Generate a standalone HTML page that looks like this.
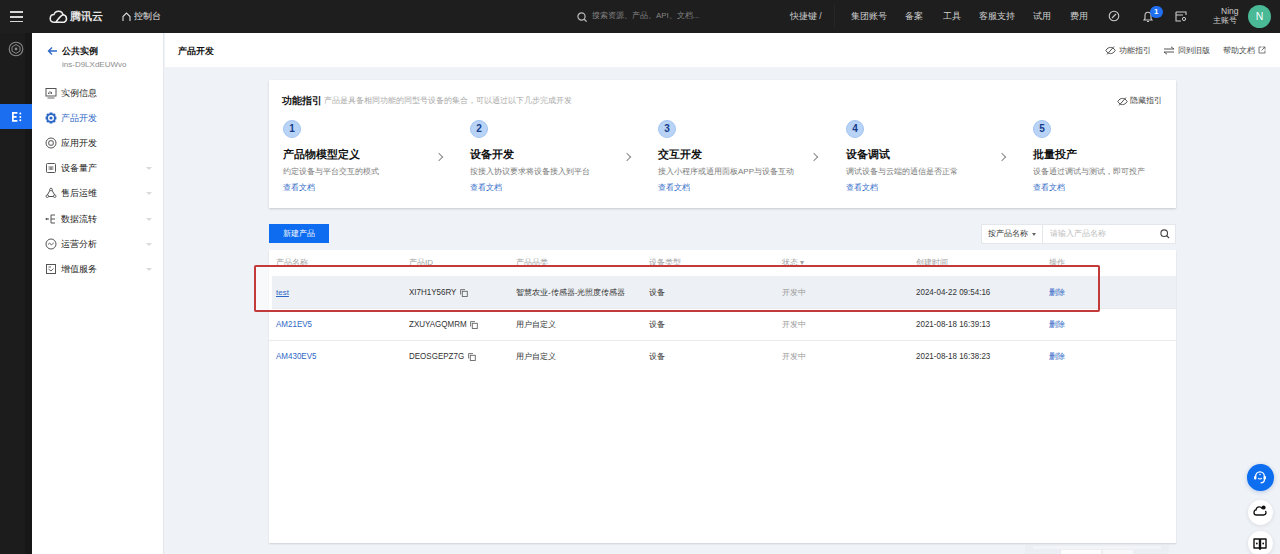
<!DOCTYPE html>
<html><head><meta charset="utf-8">
<style>
*{margin:0;padding:0;box-sizing:border-box}
html,body{width:1280px;height:554px;overflow:hidden;background:#eff2f6;font-family:"Liberation Sans",sans-serif;color:#333}
.abs{position:absolute}
#top{position:absolute;left:0;top:0;width:1280px;height:33px;background:#1e1e1e}
#top .t{position:absolute;color:#d0d0d0;font-size:8.5px;line-height:10px;top:11px;white-space:nowrap}
#lnav{position:absolute;left:0;top:33px;width:32px;height:521px;background:#1c1c1c}
#snav{position:absolute;left:32px;top:33px;width:132px;height:521px;background:#fff;border-right:1px solid #e4e6ea}
.mi{position:absolute;left:61px;font-size:9.4px;line-height:12px;color:#222;white-space:nowrap;font-weight:500}
.mic{position:absolute;left:45px;width:11px;height:10px}
.arr{position:absolute;left:146px;width:0;height:0;border-left:3px solid transparent;border-right:3px solid transparent;border-top:3px solid #dadada}
#hdr{position:absolute;left:165px;top:33px;width:1115px;height:34px;background:#fff}
.card{position:absolute;background:#fff;box-shadow:0 1px 2px rgba(0,0,0,.17)}
.step{position:absolute;top:119px}
.circ{position:absolute;left:0;top:1px;width:18px;height:18px;border-radius:50%;background:#b8d3f6;border:1px solid #a3c5f2;color:#163d8c;font-weight:bold;font-size:10px;line-height:16px;text-align:center}
.stt{position:absolute;left:0;top:29px;font-size:10.5px;font-weight:bold;color:#111;white-space:nowrap;line-height:12px}
.std{position:absolute;left:0;top:48px;font-size:8px;color:#7a7a7a;white-space:nowrap;line-height:10px}
.stl{position:absolute;left:0;top:64px;font-size:8px;color:#2d67c6;white-space:nowrap;line-height:10px}
.chev{position:absolute;top:154px;width:6px;height:6px;border-right:1px solid #8a8a8a;border-top:1px solid #8a8a8a;transform:rotate(45deg)}
.th{position:absolute;top:257.5px;font-size:8px;color:#a0a0a0;line-height:10px;white-space:nowrap}
.td{position:absolute;font-size:8px;color:#333;line-height:10px;white-space:nowrap}
.lnk{color:#2d67c6}
.lat{transform:scaleY(1.16);transform-origin:0 65%}
.rowline{position:absolute;left:269px;width:907px;height:1px;background:#e8eaee}
</style></head><body>

<div id="top">
  <!-- hamburger -->
  <div class="abs" style="left:10px;top:11.2px;width:13px;height:1.6px;background:#d6d6d6"></div>
  <div class="abs" style="left:10px;top:16px;width:13px;height:1.6px;background:#d6d6d6"></div>
  <div class="abs" style="left:10px;top:20.8px;width:13px;height:1.6px;background:#d6d6d6"></div>
  <!-- logo -->
  <svg class="abs" style="left:48.5px;top:8.8px" width="20" height="14.5" viewBox="0.4 0.6 18.2 13.2"><path d="M4.2 12.6 H14.2 A3.5 3.5 0 0 0 13.2 5.9 A4.3 4.3 0 0 0 4.9 5.7 A3.5 3.5 0 0 0 4.2 12.6 M6.6 12.6 C8.5 10 10 8 11.5 6.8 C12.4 6.1 13.2 5.9 14.2 5.9" fill="none" stroke="#eee" stroke-width="1.4" stroke-linejoin="round"/></svg>
  <div class="t" style="left:70px;top:10px;font-size:11px;line-height:13px;color:#e2e2e2;font-weight:bold">腾讯云</div>
  <svg class="abs" style="left:122px;top:12px" width="9" height="9" viewBox="0 0 9 9"><path d="M1 9 V4.5 L4.5 1 L8 4.5 V9" fill="none" stroke="#ddd" stroke-width="1.1"/></svg>
  <div class="t" style="left:134px;color:#e6e6e6">控制台</div>
  <!-- search -->
  <svg class="abs" style="left:577px;top:12px" width="11" height="10" viewBox="0 0 11 10"><circle cx="4.5" cy="4.5" r="3.6" fill="none" stroke="#bbb" stroke-width="1.2"/><path d="M7.2 7.2 L9.6 9.6" stroke="#bbb" stroke-width="1.3"/></svg>
  <div class="t" style="left:592px;color:#858585;font-size:7.9px">搜索资源、产品、API、文档...</div>
  <div class="t" style="left:790px;color:#ccc">快捷键 /</div>
  <div class="abs" style="left:834px;top:4px;width:1px;height:25px;background:#262626"></div>
  <div class="t" style="left:851px">集团账号</div>
  <div class="t" style="left:905px">备案</div>
  <div class="t" style="left:943px">工具</div>
  <div class="t" style="left:979px">客服支持</div>
  <div class="t" style="left:1033px">试用</div>
  <div class="t" style="left:1070px">费用</div>
  <svg class="abs" style="left:1108px;top:10px" width="12" height="12" viewBox="0 0 12 12"><circle cx="6" cy="6" r="4.8" fill="none" stroke="#ccc" stroke-width="1.1"/><path d="M4 8 L8 4" stroke="#ccc" stroke-width="1.1"/></svg>
  <svg class="abs" style="left:1142px;top:10px" width="12" height="13" viewBox="0 0 12 13"><path d="M2 10 H10 L9 8.5 V5.5 C9 3.5 7.6 2.2 6 2.2 C4.4 2.2 3 3.5 3 5.5 V8.5 Z M5 11.5 H7" fill="none" stroke="#ccc" stroke-width="1.1"/></svg>
  <div class="abs" style="left:1150px;top:5.8px;width:12.5px;height:12.5px;border-radius:50%;background:#1f6ff0;color:#fff;font-size:8px;font-weight:bold;line-height:12.5px;text-align:center">1</div>
  <svg class="abs" style="left:1175px;top:11px" width="12" height="11" viewBox="0 0 12 11"><path d="M1 1 H11 V4 M1 1 V10 H6 M1 4 H8" fill="none" stroke="#ccc" stroke-width="1.1"/><circle cx="9" cy="8" r="1.6" fill="none" stroke="#ccc" stroke-width="1"/></svg>
  <div class="t" style="left:1221px;top:6px;color:#ccc">Ning</div>
  <div class="t" style="left:1213px;top:16px;color:#ccc;font-size:8px">主账号</div>
  <div class="abs" style="left:1248px;top:5px;width:23px;height:23px;border-radius:50%;background:#49b996;color:#f4fffb;font-size:10.5px;line-height:23px;text-align:center">N</div>
</div>

<div id="lnav">
  <div class="abs" style="left:25px;top:0;width:7px;height:521px;background:#171717"></div>
  <svg class="abs" style="left:8px;top:8px" width="16" height="16" viewBox="0 0 16 16"><circle cx="8" cy="8" r="6.8" fill="none" stroke="#8a8a8a" stroke-width="1.1"/><path d="M8 3.5 L12 6 V10 L8 12.5 L4 10 V6 Z" fill="none" stroke="#8a8a8a" stroke-width="1"/><circle cx="8" cy="8" r="1.4" fill="#8a8a8a"/></svg>
  <div class="abs" style="left:0;top:71px;width:32px;height:24.5px;background:#1b6ef0"></div>
  <svg class="abs" style="left:10.5px;top:79px" width="11" height="10" viewBox="0 0 11 10"><path d="M1 0.9 H6.4 M1 4.8 H5.6 M1 8.9 H6.4 M1.9 0.9 V8.9" fill="none" stroke="#fff" stroke-width="1.7"/><circle cx="9.3" cy="1.5" r="1" fill="#fff"/><circle cx="9.3" cy="4.9" r="1" fill="#fff"/><circle cx="9.3" cy="8.3" r="1" fill="#fff"/></svg>
</div>

<div id="snav"></div>
<svg class="abs" style="left:47px;top:46px" width="11" height="10" viewBox="0 0 11 10"><path d="M10 5 H1.5 M5 1.5 L1.5 5 L5 8.5" fill="none" stroke="#2d67c6" stroke-width="1.3"/></svg>
<div class="mi" style="left:62px;top:45px;font-weight:bold;font-size:9.3px;color:#111">公共实例</div>
<div class="mi" style="left:62px;top:59px;font-size:8px;color:#8c8c8c">ins-D9LXdEUWvo</div>

<svg class="abs" style="left:45px;top:87px" width="12" height="12" viewBox="0 0 12 12"><rect x="1" y="1.5" width="10" height="7.5" fill="none" stroke="#555" stroke-width="1"/><path d="M2.5 11 H9.5 M3.5 7 V5.5 M5 7 V4 M6.5 7 V5" stroke="#555" stroke-width="0.9"/></svg>
<svg class="abs" style="left:45px;top:112px" width="12" height="12" viewBox="0 0 12 12"><path d="M4.6 0.6 H7.4 L7.8 2 L9.2 1.3 L10.7 2.8 L10 4.2 L11.4 4.6 V7.4 L10 7.8 L10.7 9.2 L9.2 10.7 L7.8 10 L7.4 11.4 H4.6 L4.2 10 L2.8 10.7 L1.3 9.2 L2 7.8 L0.6 7.4 V4.6 L2 4.2 L1.3 2.8 L2.8 1.3 L4.2 2 Z" fill="#2d67c6"/><circle cx="6" cy="6" r="3" fill="#fff"/><circle cx="6" cy="6" r="1.6" fill="#2d67c6"/></svg>
<svg class="abs" style="left:45px;top:137px" width="12" height="12" viewBox="0 0 12 12"><circle cx="6" cy="6" r="5" fill="none" stroke="#555" stroke-width="1"/><rect x="3.8" y="3.8" width="4.4" height="4.4" rx="1.2" fill="none" stroke="#555" stroke-width="1"/></svg>
<svg class="abs" style="left:45px;top:162px" width="12" height="12" viewBox="0 0 12 12"><rect x="1.5" y="1.5" width="9" height="9" rx="1" fill="none" stroke="#555" stroke-width="1"/><path d="M3.5 5 H8.5 M3.5 7 H8.5 M6 5 V8" stroke="#555" stroke-width="0.9"/></svg>
<svg class="abs" style="left:45px;top:187px" width="12" height="12" viewBox="0 0 12 12"><path d="M6 1.5 L10.5 9.5 H1.5 Z" fill="none" stroke="#555" stroke-width="1"/><circle cx="6" cy="2.5" r="1.3" fill="#fff" stroke="#555" stroke-width="0.9"/><circle cx="2.3" cy="9.2" r="1.3" fill="#fff" stroke="#555" stroke-width="0.9"/><circle cx="9.7" cy="9.2" r="1.3" fill="#fff" stroke="#555" stroke-width="0.9"/></svg>
<svg class="abs" style="left:45px;top:213px" width="12" height="12" viewBox="0 0 12 12"><path d="M1 6 H4 M6 2 V10 M6 2 H10 M6 6 H10 M6 10 H10" stroke="#555" stroke-width="1"/><circle cx="1.5" cy="6" r="1" fill="#555"/></svg>
<svg class="abs" style="left:45px;top:238px" width="12" height="12" viewBox="0 0 12 12"><circle cx="6" cy="6" r="5" fill="none" stroke="#555" stroke-width="1"/><path d="M3 6.5 L4.6 5 L6.4 7 L8.8 4.8" fill="none" stroke="#555" stroke-width="0.9"/></svg>
<svg class="abs" style="left:45px;top:263px" width="12" height="12" viewBox="0 0 12 12"><rect x="1.5" y="1.5" width="9" height="9" fill="none" stroke="#555" stroke-width="1"/><path d="M3.5 4 H6 M3.5 6 L6 8 L8.5 5.5" fill="none" stroke="#555" stroke-width="0.9"/></svg>
<div class="mi" style="top:87px">实例信息</div>
<div class="mi" style="top:112px;color:#2d67c6">产品开发</div>
<div class="mi" style="top:137px">应用开发</div>
<div class="mi" style="top:162px">设备量产</div>
<div class="mi" style="top:187px">售后运维</div>
<div class="mi" style="top:213px">数据流转</div>
<div class="mi" style="top:238px">运营分析</div>
<div class="mi" style="top:263px">增值服务</div>
<div class="arr" style="top:167px"></div>
<div class="arr" style="top:192px"></div>
<div class="arr" style="top:218px"></div>
<div class="arr" style="top:243px"></div>
<div class="arr" style="top:268px"></div>

<div id="hdr"></div>
<div class="abs" style="left:177.5px;top:44.5px;font-size:9.4px;font-weight:bold;color:#111;line-height:12px">产品开发</div>
<svg class="abs" style="left:1105px;top:46px" width="11" height="9" viewBox="0 0 11 9"><path d="M0.8 4.5 C2.2 2.2 3.8 1.4 5.5 1.4 C7.2 1.4 8.8 2.2 10.2 4.5 C8.8 6.8 7.2 7.6 5.5 7.6 C3.8 7.6 2.2 6.8 0.8 4.5 Z" fill="none" stroke="#555" stroke-width="1"/><path d="M2 8.5 L9 0.5" stroke="#555" stroke-width="1"/></svg>
<div class="abs" style="left:1119px;top:45.5px;font-size:8px;color:#444;line-height:10px">功能指引</div>
<svg class="abs" style="left:1163px;top:46px" width="12" height="9" viewBox="0 0 12 9"><path d="M1 3 H11 M8 0.8 L11 3 M11 6 H1 M4 8.2 L1 6" fill="none" stroke="#555" stroke-width="1"/></svg>
<div class="abs" style="left:1178px;top:45.5px;font-size:8px;color:#444;line-height:10px">回到旧版</div>
<div class="abs" style="left:1223px;top:45.5px;font-size:8px;color:#444;line-height:10px">帮助文档</div>
<svg class="abs" style="left:1258px;top:46px" width="8" height="8" viewBox="0 0 8 8"><path d="M3.5 1 H1 V7 H7 V4.5 M4.5 1 H7 V3.5 M7 1 L3.5 4.5" fill="none" stroke="#666" stroke-width="0.9"/></svg>

<!-- guide card -->
<div class="card" style="left:269px;top:80px;width:907px;height:128px"></div>
<div class="abs" style="left:282px;top:95px;font-size:9.5px;font-weight:bold;color:#111;line-height:12px">功能指引</div>
<div class="abs" style="left:324px;top:96px;font-size:8px;color:#aaa;line-height:10px">产品是具备相同功能的同型号设备的集合，可以通过以下几步完成开发</div>
<svg class="abs" style="left:1117px;top:96.5px" width="11" height="9" viewBox="0 0 11 9"><path d="M0.8 4.5 C2.2 2.2 3.8 1.4 5.5 1.4 C7.2 1.4 8.8 2.2 10.2 4.5 C8.8 6.8 7.2 7.6 5.5 7.6 C3.8 7.6 2.2 6.8 0.8 4.5 Z" fill="none" stroke="#555" stroke-width="1"/><path d="M2 8.5 L9 0.5" stroke="#555" stroke-width="1"/></svg>
<div class="abs" style="left:1130px;top:96px;font-size:8px;color:#444;line-height:10px">隐藏指引</div>

<div class="step" style="left:283px"><div class="circ">1</div><div class="stt">产品物模型定义</div><div class="std">约定设备与平台交互的模式</div><div class="stl">查看文档</div></div>
<div class="step" style="left:470px"><div class="circ">2</div><div class="stt">设备开发</div><div class="std">按接入协议要求将设备接入到平台</div><div class="stl">查看文档</div></div>
<div class="step" style="left:658px"><div class="circ">3</div><div class="stt">交互开发</div><div class="std">接入小程序或通用面板APP与设备互动</div><div class="stl">查看文档</div></div>
<div class="step" style="left:846px"><div class="circ">4</div><div class="stt">设备调试</div><div class="std">调试设备与云端的通信是否正常</div><div class="stl">查看文档</div></div>
<div class="step" style="left:1033px"><div class="circ">5</div><div class="stt">批量投产</div><div class="std">设备通过调试与测试，即可投产</div><div class="stl">查看文档</div></div>
<div class="chev" style="left:436px"></div>
<div class="chev" style="left:624px"></div>
<div class="chev" style="left:811px"></div>
<div class="chev" style="left:999px"></div>

<!-- toolbar -->
<div class="abs" style="left:269px;top:224px;width:60px;height:19px;background:#0d6cf0;color:#fff;font-size:8px;line-height:19px;text-align:center">新建产品</div>
<div class="abs" style="left:981px;top:224px;width:195px;height:20px;background:#fff;border:1px solid #e3e6ea"></div>
<div class="abs" style="left:1042px;top:224px;width:1px;height:20px;background:#e3e6ea"></div>
<div class="abs" style="left:988px;top:229px;font-size:8px;color:#333;line-height:10px">按产品名称</div>
<div class="abs" style="left:1032px;top:233px;width:0;height:0;border-left:2.5px solid transparent;border-right:2.5px solid transparent;border-top:3px solid #666"></div>
<div class="abs" style="left:1050px;top:229px;font-size:8px;color:#bbb;line-height:10px">请输入产品名称</div>
<svg class="abs" style="left:1160px;top:229px" width="10" height="10" viewBox="0 0 10 10"><circle cx="4.2" cy="4.2" r="3.3" fill="none" stroke="#444" stroke-width="1.1"/><path d="M6.6 6.6 L9 9" stroke="#444" stroke-width="1.2"/></svg>

<!-- table -->
<div class="abs" style="left:269px;top:250px;width:907px;height:293px;background:#fff;box-shadow:0 1px 1.5px rgba(0,0,0,.14)"></div>
<div class="th" style="left:276px">产品名称</div>
<div class="th" style="left:409px">产品ID</div>
<div class="th" style="left:516px">产品品类</div>
<div class="th" style="left:649px">设备类型</div>
<div class="th" style="left:782px">状态 ▾</div>
<div class="th" style="left:916px">创建时间</div>
<div class="th" style="left:1049px">操作</div>
<div class="abs" style="left:269px;top:276px;width:907px;height:31.5px;background:#edf0f4"></div>
<div class="rowline" style="top:308px"></div>
<div class="rowline" style="top:339.5px"></div>

<div class="td lnk" style="left:276px;top:288px;text-decoration:underline">test</div>
<div class="td lat" style="left:409px;top:288px">XI7H1Y56RY</div>
<div class="td" style="left:516px;top:288px">智慧农业-传感器-光照度传感器</div>
<div class="td" style="left:649px;top:288px">设备</div>
<div class="td" style="left:782px;top:288px;color:#999">开发中</div>
<div class="td lat" style="left:916px;top:288px">2024-04-22 09:54:16</div>
<div class="td lnk" style="left:1049px;top:288px">删除</div>

<div class="td lnk lat" style="left:276px;top:320px">AM21EV5</div>
<div class="td lat" style="left:409px;top:320px">ZXUYAGQMRM</div>
<div class="td" style="left:516px;top:320px">用户自定义</div>
<div class="td" style="left:649px;top:320px">设备</div>
<div class="td" style="left:782px;top:320px;color:#999">开发中</div>
<div class="td lat" style="left:916px;top:320px">2021-08-18 16:39:13</div>
<div class="td lnk" style="left:1049px;top:320px">删除</div>

<div class="td lnk lat" style="left:276px;top:352px">AM430EV5</div>
<div class="td lat" style="left:409px;top:352px">DEOSGEPZ7G</div>
<div class="td" style="left:516px;top:352px">用户自定义</div>
<div class="td" style="left:649px;top:352px">设备</div>
<div class="td" style="left:782px;top:352px;color:#999">开发中</div>
<div class="td lat" style="left:916px;top:352px">2021-08-18 16:38:23</div>
<div class="td lnk" style="left:1049px;top:352px">删除</div>

<svg class="abs" style="left:460px;top:289px" width="8" height="8" viewBox="0 0 8 8"><path d="M0.6 5.5 V0.6 H5" fill="none" stroke="#666" stroke-width="0.9"/><rect x="2.3" y="2.3" width="5" height="5.2" fill="none" stroke="#666" stroke-width="0.9"/></svg>
<svg class="abs" style="left:470px;top:321px" width="8" height="8" viewBox="0 0 8 8"><path d="M0.6 5.5 V0.6 H5" fill="none" stroke="#666" stroke-width="0.9"/><rect x="2.3" y="2.3" width="5" height="5.2" fill="none" stroke="#666" stroke-width="0.9"/></svg>
<svg class="abs" style="left:468px;top:353px" width="8" height="8" viewBox="0 0 8 8"><path d="M0.6 5.5 V0.6 H5" fill="none" stroke="#666" stroke-width="0.9"/><rect x="2.3" y="2.3" width="5" height="5.2" fill="none" stroke="#666" stroke-width="0.9"/></svg>
<!-- red highlight -->
<div class="abs" style="left:256px;top:267px;width:13px;height:43px;background:rgba(255,255,255,.55)"></div>
<div class="abs" style="left:269px;top:276px;width:2.5px;height:33px;background:#fff"></div>
<div class="abs" style="left:254px;top:265px;width:846px;height:47px;border:2px solid #c23a3a;border-radius:2px;box-shadow:0 0 0.6px rgba(160,40,40,.6)"></div>

<!-- floating buttons -->
<div class="abs" style="left:1247px;top:464px;width:26.5px;height:26.5px;border-radius:50%;background:#0d6ef0;box-shadow:0 1px 4px rgba(0,80,200,.25)"></div>
<svg class="abs" style="left:1253px;top:470px" width="14" height="14" viewBox="0 0 14 14"><path d="M2.6 7 V6.4 C2.6 3.8 4.5 1.8 7 1.8 C9.5 1.8 11.4 3.8 11.4 6.4 V9.4 C11.4 11.4 9.8 12.8 7.6 12.8" fill="none" stroke="#fff" stroke-width="1.3"/><rect x="1" y="6" width="2.4" height="3.6" rx="1" fill="#fff"/><rect x="10.6" y="6" width="2.4" height="3.6" rx="1" fill="#fff"/><path d="M5.2 8.2 C6 9.2 8 9.2 8.8 8.2" fill="none" stroke="#fff" stroke-width="1.1"/><circle cx="7" cy="4.4" r="0.75" fill="#fff"/></svg>
<div class="abs" style="left:1247.5px;top:499.5px;width:25px;height:25px;border-radius:50%;background:#fff;box-shadow:0 1px 4px rgba(0,0,0,.1)"></div>
<svg class="abs" style="left:1253px;top:504px" width="14" height="13" viewBox="0 0 14 13"><path d="M9.2 4.6 C8.6 3.4 7.5 2.8 6.3 2.8 C4.5 2.8 3.2 4.2 3.1 5.9 C1.9 6.1 1 7.1 1 8.4 C1 9.8 2.1 11 3.6 11 H10.6 C12 11 13 10 13 8.6 C13 8 12.8 7.5 12.4 7" fill="none" stroke="#111" stroke-width="1.3"/><circle cx="10.6" cy="3.6" r="2" fill="#111"/></svg>
<div class="abs" style="left:1247.5px;top:530.5px;width:25px;height:25px;border-radius:50%;background:#fff;box-shadow:0 1px 4px rgba(0,0,0,.1)"></div>
<svg class="abs" style="left:1253px;top:538px" width="14" height="12" viewBox="0 0 14 12"><path d="M1 1 H6.5 V10 H1 Z M7.5 1 H13 V10 H7.5 Z M6 10 L7 11.2 L8 10" fill="none" stroke="#111" stroke-width="1.4" stroke-linejoin="round"/><circle cx="3.8" cy="5.5" r="0.9" fill="#111"/><circle cx="10.2" cy="5.5" r="0.9" fill="#111"/></svg>

<!-- pagination stub -->
<div class="abs" style="left:1025px;top:545px;width:144px;height:9px;background:#ebeef2"></div>
<div class="abs" style="left:1033px;top:546px;width:128px;height:3px;background:#f2f4f7"></div>
<div class="abs" style="left:1061px;top:550px;width:40px;height:4px;background:#fdfdfe"></div>
<div class="abs" style="left:1103px;top:550px;width:30px;height:4px;background:#f7f8fa"></div>
</body></html>
